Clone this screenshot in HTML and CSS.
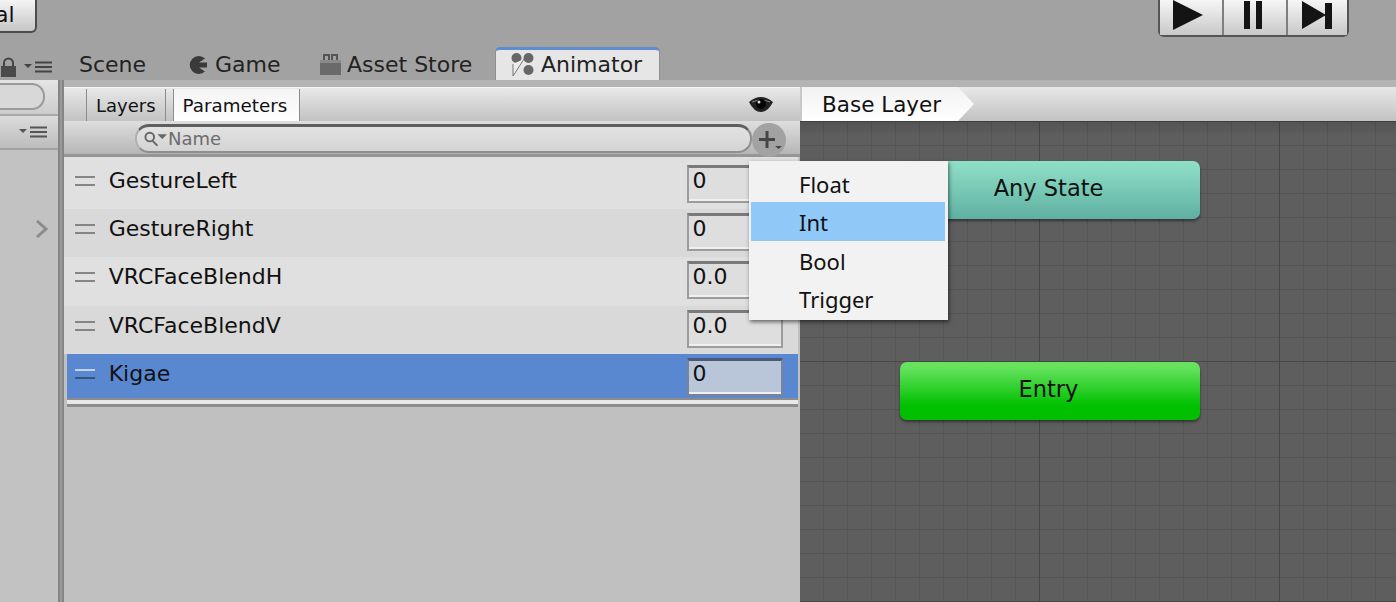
FILE: index.html
```html
<!DOCTYPE html>
<html lang="en">
<head>
    <meta charset="UTF-8">
    <title>Animator</title>
    <link rel="stylesheet" href="styles.css">
</head>
<body>
    <div class="top">
        <div class="layout-btn">al</div>
        <div class="transport">
            <div class="tbtn tbtn-play">
                <svg width="30" height="30" viewBox="0 0 30 30"><path class="dark" d="M0 0L30 15L0 30Z"/></svg>
            </div>
            <div class="tbtn tbtn-pause">
                <svg width="20" height="28" viewBox="0 0 20 28"><path class="dark" d="M0 0H6V28H0ZM12 0H18V28H12Z"/></svg>
            </div>
            <div class="tbtn tbtn-step">
                <svg width="32" height="28" viewBox="0 0 32 28"><path class="dark" d="M0 0L24 14L0 28ZM23 2H30V28H23Z"/></svg>
            </div>
        </div>
    </div>

    <div class="tabs">
        <div class="tabs-tools">
            <svg width="17" height="20" viewBox="0 0 17 20"><path d="M4 10V6a4.500 4.500 0 0 1 9 0V10" fill="none" stroke="#444" stroke-width="2"/><rect x="1" y="9" width="15" height="11" fill="#4a4a4a"/></svg>
            <svg class="menu-ico" width="28" height="12" viewBox="0 0 28 12"><path d="M0 3H8L4 7Z" fill="#444"/><path d="M11 1.500H28M11 6H28M11 10.500H28" stroke="#444" stroke-width="2"/></svg>
        </div>
        <div class="tab tab-scene">Scene</div>
        <div class="tab tab-game">
            <svg width="20" height="18" viewBox="0 0 20 18"><path d="M17 2.500A9 9 0 1 0 17 15.500L11 11.500H19V6.500H11Z" fill="#3a3a3a"/></svg>
            Game
        </div>
        <div class="tab tab-store">
            <svg width="22" height="21" viewBox="0 0 22 21"><rect x="0" y="6" width="21" height="15" fill="#6a6a6a"/><path d="M0 6H21V9H0Z" fill="#8a8a8a"/><path d="M4 6V1H9V6M12 6V1H17V6" fill="none" stroke="#555" stroke-width="2"/></svg>
            Asset Store
        </div>
        <div class="tab tab-active">
            <svg width="23" height="24" viewBox="0 0 23 24"><circle cx="5.500" cy="6" r="5" fill="#666"/><circle cx="17.500" cy="6" r="5" fill="#666"/><circle cx="17.500" cy="18" r="5" fill="#666"/><path d="M2 12V24L13 7" fill="#eee" stroke="#777" stroke-width="1"/></svg>
            Animator
        </div>
    </div>

    <div class="strip"></div>

    <div class="main">
        <div class="side">
            <div class="side-search"><div class="side-pill"></div></div>
            <div class="side-head">
                <svg width="28" height="12" viewBox="0 0 28 12"><path d="M0 3H8L4 7Z" fill="#555"/><path d="M11 1.500H28M11 6H28M11 10.500H28" stroke="#555" stroke-width="2"/></svg>
            </div>
            <div class="side-body">
                <svg width="14" height="20" viewBox="0 0 14 20"><path d="M2 2L11 10L2 18" fill="none" stroke="#8a8a8a" stroke-width="3"/></svg>
            </div>
        </div>
        <div class="divider"></div>

        <div class="params">
            <div class="params-head">
                <div class="ptab">Layers</div>
                <div class="ptab ptab-on">Parameters</div>
                <svg class="eye" width="26" height="18" viewBox="0 0 26 18"><path d="M1 7Q13 -3 25 7Q20 17 13 17Q6 17 1 7Z" fill="#222"/><path d="M4 7Q13 3 22 7" fill="none" stroke="#888" stroke-width="1"/><circle cx="13" cy="9" r="5" fill="#000"/><circle cx="11" cy="7" r="1.500" fill="#ddd"/></svg>
            </div>
            <div class="search-row">
                <div class="search">
                    <svg width="25" height="16" viewBox="0 0 26 16"><circle cx="7" cy="7" r="4.500" fill="none" stroke="#666" stroke-width="2"/><path d="M10 11L15 16" stroke="#666" stroke-width="2"/><path d="M15 4H25L20 9Z" fill="#666"/></svg>
                    <span>Name</span>
                </div>
                <div class="plus">
                    <svg width="26" height="26" viewBox="0 0 26 26"><path d="M2 10H18V13H2ZM8.500 3H11.500V20H8.500Z" fill="#444"/><path d="M18 18H25L21.500 21Z" fill="#444"/></svg>
                </div>
            </div>
            <div class="list">
                <div class="row row-a row-first">
                    <div class="grip"></div>
                    <div class="name">GestureLeft</div>
                    <div class="val">0</div>
                </div>
                <div class="row row-b">
                    <div class="grip"></div>
                    <div class="name">GestureRight</div>
                    <div class="val">0</div>
                </div>
                <div class="row row-a">
                    <div class="grip"></div>
                    <div class="name">VRCFaceBlendH</div>
                    <div class="val">0.0</div>
                </div>
                <div class="row row-b">
                    <div class="grip"></div>
                    <div class="name">VRCFaceBlendV</div>
                    <div class="val">0.0</div>
                </div>
                <div class="row row-sel">
                    <div class="grip"></div>
                    <div class="name">Kigae</div>
                    <div class="val">0</div>
                </div>
            </div>
            <div class="list-foot"></div>
        </div>

        <div class="graph">
            <div class="graph-head">
                <div class="crumb">Base Layer</div>
                <div class="crumb-tip"></div>
            </div>
            <div class="canvas">
                <div class="node node-any">Any State</div>
                <div class="node node-entry">Entry</div>
            </div>
        </div>

        <div class="menu">
            <div class="menu-item">Float</div>
            <div class="menu-item menu-hover">Int</div>
            <div class="menu-item">Bool</div>
            <div class="menu-item">Trigger</div>
        </div>
    </div>
</body>
</html>
```

FILE: styles.css
```css
* {
    margin: 0;
    padding: 0;
    box-sizing: border-box;
}
html, body {
    width: 1396px;
    height: 602px;
    overflow: hidden;
}
body {
    background: #a2a2a2;
    font-family: "DejaVu Sans", sans-serif;
    color: #111;
}
.dark {
    fill: #141414;
}

/* top toolbar */
.top {
    height: 47px;
    display: flex;
    justify-content: space-between;
    align-items: flex-start;
    padding-right: 47px;
}
.layout-btn {
    width: 57px;
    height: 33px;
    margin-left: -20px;
    padding-left: 13px;
    border: 2px solid #4c4c4c;
    border-top: 0;
    border-radius: 0 0 6px 6px;
    background: linear-gradient(#f4f4f4, #c6c6c6);
    font-size: 22px;
    line-height: 30px;
}
.transport {
    display: flex;
    width: 191px;
    height: 37px;
    border: 2px solid #555;
    border-top: 0;
    border-radius: 0 0 6px 6px;
}
.tbtn {
    display: flex;
    align-items: center;
    justify-content: center;
    padding-bottom: 5px;
    background: linear-gradient(#f6f6f6, #c8c8c8);
    border-right: 2px solid #7e7e7e;
}
.tbtn-play {
    width: 64px;
    padding-right: 6px;
}
.tbtn-pause {
    width: 64px;
    padding-right: 3px;
}
.tbtn-step {
    flex: 1;
    border-right: 0;
}

/* window tabs */
.tabs {
    height: 33px;
    display: flex;
    align-items: flex-end;
}
.tabs-tools {
    width: 79px;
    height: 33px;
    display: flex;
    align-items: center;
    padding-top: 6px;
}
.menu-ico {
    margin-left: 7px;
}
.tab {
    height: 33px;
    display: flex;
    align-items: center;
    gap: 7px;
    font-size: 22px;
    color: #222;
    padding-top: 2px;
}
.tab-scene {
    width: 109px;
}
.tab-game {
    width: 132px;
}
.tab-store {
    width: 175px;
    gap: 5px;
}
.tab-active {
    width: 165px;
    padding: 0 0 2px 15px;
    background: #e6e6e6;
    border-top: 3px solid #5f8ccc;
    border-radius: 5px 5px 0 0;
    border-left: 1px solid #8f8f8f;
    border-right: 1px solid #8f8f8f;
}
.strip {
    height: 7px;
    background: #b4b4b4;
}

/* main area */
.main {
    height: 515px;
    display: flex;
    position: relative;
}
.side {
    width: 58px;
    margin-top: -7px;
    background: #c2c2c2;
}
.side-search {
    height: 34px;
    padding-top: 3px;
    background: linear-gradient(#e4e4e4, #cdcdcd);
}
.side-pill {
    width: 45px;
    height: 27px;
    border: 2px solid #9a9a9a;
    border-left: 0;
    border-radius: 0 13px 13px 0;
    background: #d8d8d8;
}
.side-head {
    height: 36px;
    display: flex;
    justify-content: flex-end;
    align-items: center;
    padding-right: 11px;
    border-top: 2px solid #a8a8a8;
    border-bottom: 2px solid #a0a0a0;
    background: linear-gradient(#dcdcdc, #bcbcbc);
}
.side-body {
    padding: 69px 0 0 35px;
}
.divider {
    width: 6px;
    margin-top: -7px;
    background: #9a9a9a;
    border-left: 2px solid #858585;
    border-right: 2px solid #858585;
}

/* parameters panel */
.params {
    width: 736px;
    background: #c0c0c0;
}
.params-head {
    height: 34px;
    display: flex;
    align-items: flex-end;
    padding-left: 22px;
    border-top: 1px solid #f4f4f4;
    background: linear-gradient(#e8e8e8, #c2c2c2);
}
.ptab {
    height: 32px;
    line-height: 33px;
    font-size: 18px;
    color: #111;
    padding: 0 9px;
    border-left: 1px solid #8c8c8c;
    border-right: 1px solid #8c8c8c;
}
.ptab-on {
    width: 127px;
    margin-left: 7px;
    font-size: 18.300px;
    background: linear-gradient(#f4f4f4, #ffffff);
}
.eye {
    margin: 0 0 8px 448px;
}
.search-row {
    height: 36px;
    display: flex;
    align-items: flex-start;
    padding: 3px 14px 0 71px;
    border-bottom: 3px solid #969696;
    background: linear-gradient(#dedede, #b6b6b6);
}
.search {
    width: 617px;
    height: 29px;
    display: flex;
    align-items: center;
    padding: 0 0 2px 6px;
    border: 2px solid #8e8e8e;
    border-top: 3px solid #5f5f5f;
    border-left-color: #b0b0b0;
    border-radius: 14px;
    background: linear-gradient(#e2e2e2, #d4d4d4);
    font-size: 18px;
    color: #6c6c6c;
}
.plus {
    width: 34px;
    height: 34px;
    margin-top: -1px;
    padding: 5px 0 0 5px;
    border-radius: 50%;
    background: #a2a2a2;
}
.list {
    margin-right: 2px;
}
.row {
    height: 48.300px;
    display: flex;
    align-items: flex-start;
    padding: 4px 15px 0 11px;
}
.row-first {
    height: 52px;
    padding-top: 8px;
}
.row-a {
    background: #e0e0e0;
}
.row-b {
    background: #d9d9d9;
}
.row-sel {
    height: 44px;
    margin-left: 3px;
    padding-left: 8px;
    background: #5a88d0;
}
.grip {
    width: 20px;
    height: 10px;
    margin-top: 11px;
    border-top: 2px solid #858585;
    border-bottom: 2px solid #858585;
}
.row-sel .grip {
    border-top-color: #c4d4ee;
    border-bottom-color: #34557f;
}
.name {
    width: 588px;
    margin: 1px 0 0 14px;
    font-size: 22px;
    line-height: 30px;
}
.val {
    width: 97px;
    height: 38px;
    padding-left: 3px;
    border: 2px solid #9c9c9c;
    border-top: 3px solid #7a7a7a;
    box-shadow: inset 0 -2px 0 #f0f0f0;
    background: #dedede;
    font-size: 22px;
    line-height: 25px;
}
.row-sel .val {
    background: #b9c6da;
    border-color: #7a8498;
    border-top-color: #4c5878;
}
.list-foot {
    height: 9px;
    margin: 0 2px 0 3px;
    border-top: 2px solid #8c8c8c;
    border-bottom: 3px solid #8c8c8c;
    background: #e8e8e8;
}

/* state machine graph */
.graph {
    flex: 1;
}
.graph-head {
    height: 34px;
    display: flex;
    background: linear-gradient(#e8e8e8, #c2c2c2);
}
.crumb {
    width: 158px;
    padding-left: 20px;
    background: linear-gradient(#f2f2f2, #ffffff);
    font-size: 21.500px;
    line-height: 35px;
    color: #111;
    border-left: 2px solid #c8c8c8;
}
.crumb-tip {
    width: 16px;
    background: linear-gradient(#f2f2f2, #ffffff);
    clip-path: polygon(0 0, 100% 50%, 0 100%);
}
.canvas {
    height: 481px;
    position: relative;
    background-color: #5e5e5e;
    background-image:
        linear-gradient(rgba(0, 0, 0, 0.12), transparent),
        linear-gradient(90deg, #474747 1px, transparent 1px),
        linear-gradient(#474747 1px, transparent 1px),
        linear-gradient(90deg, #555 1px, transparent 1px),
        linear-gradient(#555 1px, transparent 1px);
    background-size: 100% 16px, 240px 240px, 240px 240px, 24px 24px, 24px 24px;
    background-position: 0 0, 239px 0, 0 0, 23px 0, 0 0;
    background-repeat: no-repeat, repeat, repeat, repeat, repeat;
}
.node {
    position: absolute;
    left: 100px;
    width: 300px;
    height: 58px;
    display: flex;
    align-items: center;
    justify-content: center;
    padding: 0 3px 4px 0;
    border-radius: 7px;
    font-size: 22.500px;
    color: #111;
    box-shadow: 0 2px 3px rgba(0, 0, 0, 0.45);
}
.node-any {
    top: 40px;
    background: linear-gradient(#90e0c8, #60b0a2);
}
.node-entry {
    top: 241px;
    background: linear-gradient(#66e25e 10%, #00c000 75%);
}

/* popup */
.menu {
    position: absolute;
    left: 749px;
    top: 74px;
    width: 199px;
    height: 159px;
    padding: 3px 3px 2px 2px;
    background: #f2f2f2;
    box-shadow: 1px 2px 4px rgba(0, 0, 0, 0.55);
    font-family: "Noto Sans", sans-serif;
    font-size: 22px;
    color: #111;
}
.menu-item {
    height: 38.300px;
    padding-left: 48px;
    line-height: 40.500px;
}
.menu-hover {
    background: #90c8f8;
}
```
